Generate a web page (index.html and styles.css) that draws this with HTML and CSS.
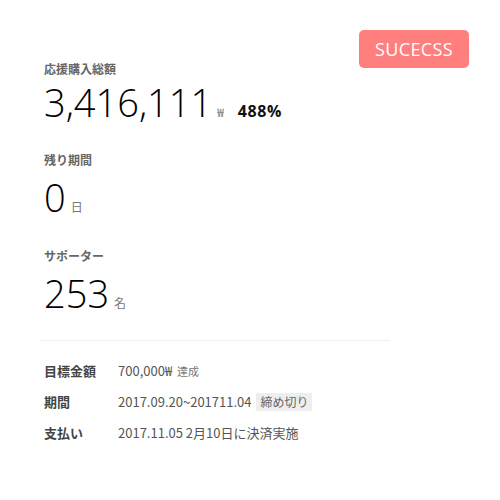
FILE: index.html
```html
<!DOCTYPE html>
<html lang="ja">
<head>
<meta charset="utf-8">
<link rel="stylesheet" href="styles.css">
</head>
<body>
<div class="panel">
  <div class="badge">SUCECSS</div>
  <section class="stat stat-first">
    <div class="stat-label">応援購入総額</div>
    <div class="stat-value"><span class="num">3,416,111</span><span class="unit">₩</span><span class="pct">488%</span></div>
  </section>
  <section class="stat">
    <div class="stat-label">残り期間</div>
    <div class="stat-value"><span class="num">0</span><span class="unit">日</span></div>
  </section>
  <section class="stat stat-last">
    <div class="stat-label">サポーター</div>
    <div class="stat-value"><span class="num">253</span><span class="unit">名</span></div>
  </section>
  <div class="divider"></div>
  <dl class="details">
    <div class="row"><dt>目標金額</dt><dd>700,000₩ <span class="sub">達成</span></dd></div>
    <div class="row"><dt>期間</dt><dd>2017.09.20~201711.04 <span class="tag">締め切り</span></dd></div>
    <div class="row"><dt>支払い</dt><dd>2017.11.05 2月10日に決済実施</dd></div>
  </dl>
</div>
</body>
</html>
```
FILE: styles.css
```css
html, body { margin: 0; padding: 0; background: #fff; }
body { font-family: "Open Sans", "Noto Sans CJK JP", sans-serif; color: #222; }
.panel { position: relative; padding: 59px 0 0 44px; width: 346px; }
.badge {
  position: absolute; left: 359px; top: 30px; width: 110px; height: 38px;
  background: #ff7f7f; color: #fff; border-radius: 5px; letter-spacing: 0.4px;
  font-size: 18px; display: flex; align-items: center; justify-content: center;
}
.stat { margin-bottom: 25px; }
.stat-first { margin-bottom: 24px; }
.stat-last { margin-bottom: 23px; }
.stat-label { font-family: "Noto Sans CJK JP", sans-serif; font-size: 12px; font-weight: 700; color: #666; line-height: 20px; }
.stat-value { display: flex; align-items: baseline; height: 48px; line-height: 48px; margin-top: 3px; }
.stat-first .stat-value { margin-top: -1px; }
.num { font-size: 38px; font-weight: 300; color: #000; }
.unit { font-family: "Noto Sans CJK JP", sans-serif; font-size: 12px; color: #777; margin-left: 5px; line-height: 1; }
.pct { font-size: 16px; font-weight: 700; color: #111; margin-left: 14px; letter-spacing: 0.6px; line-height: 1; }
.divider { height: 1px; background: #eee; margin: 0 0 14px -4px; }
.details { margin: 0; font-family: "Noto Sans CJK JP", sans-serif; font-size: 13px; }
.row { display: flex; align-items: center; height: 31px; }
dt { width: 74px; color: #444; font-weight: 700; }
dd { margin: 0; color: #555; }
.sub { font-size: 11px; color: #777; margin-left: 2px; }
.tag { display: inline-block; background: #eee; color: #666; font-size: 12px; padding: 0 4px; line-height: 18px; margin-left: 2px; }
```
